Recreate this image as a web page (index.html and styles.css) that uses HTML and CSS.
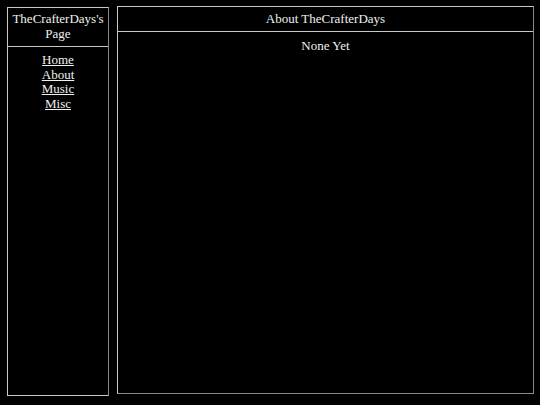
FILE: index.html
```html
<!DOCTYPE html>
<html>
<head>
<meta charset="utf-8">
<title>TheCrafterDays's Page</title>
<link rel="stylesheet" href="styles.css">
</head>
<body>
<div class="layout">
  <div class="sidebar">
    <div class="side-title">TheCrafterDays's Page</div>
    <nav class="nav">
      <a href="#">Home</a>
      <a href="#">About</a>
      <a href="#">Music</a>
      <a href="#">Misc</a>
    </nav>
  </div>
  <div class="main">
    <div class="main-title">About TheCrafterDays</div>
    <div class="main-body">None Yet</div>
  </div>
</div>
</body>
</html>
```
FILE: styles.css
```css
html, body {
  margin: 0;
  padding: 0;
  background: #000;
}
body {
  font-family: "Liberation Serif", "Times New Roman", serif;
  font-size: 13px;
  line-height: 15px;
  color: #f0f0f0;
}
.layout {
  display: flex;
  gap: 8px;
  padding: 6px 6px 0 7px;
}
.sidebar {
  width: 100px;
  height: 387px;
  margin-top: 1px;
  border: 1px solid #c8c8c8;
  border-right-color: #8a8a8a;
  display: flex;
  flex-direction: column;
}
.side-title {
  text-align: center;
  padding: 3px 2px 5px;
  border-bottom: 1px solid #c8c8c8;
}
.nav {
  display: flex;
  flex-direction: column;
  align-items: center;
  padding-top: 6px;
  line-height: 14.5px;
}
.nav a {
  color: #f0f0f0;
  text-decoration: underline;
}
.main {
  flex: 1;
  height: 386px;
  border: 1px solid #c8c8c8;
  border-right-color: #8a8a8a;
  border-bottom-color: #8a8a8a;
  display: flex;
  flex-direction: column;
}
.main-title {
  text-align: center;
  padding: 4px 0 5px;
  border-bottom: 1px solid #c8c8c8;
}
.main-body {
  text-align: center;
  padding-top: 6px;
}
```
